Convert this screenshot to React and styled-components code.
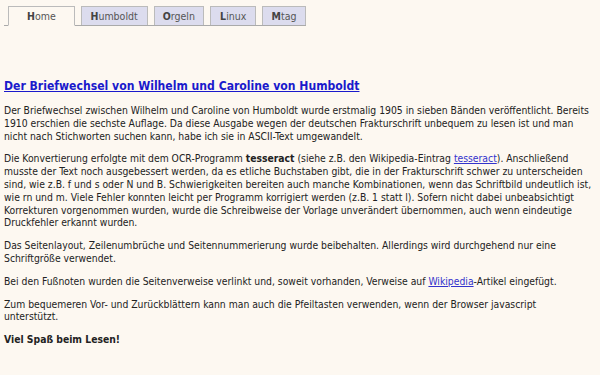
import React from "react";
import styled, { createGlobalStyle } from "styled-components";

const Global = createGlobalStyle`
  html, body { margin: 0; padding: 0; background: #fdf8f1; }
  body { font-family: "DejaVu Sans Condensed", "DejaVu Sans", sans-serif; font-size: 10.3px; color: #222; }
`;

const Page = styled.div`
  padding: 6px 8px 0 4px;
`;

const TabBar = styled.nav`
  display: flex;
  align-items: flex-end;
  gap: 6px;
  padding-left: 4px;
  width: 298px;
  border-bottom: 1px solid #aaa;
`;

const Tab = styled.a`
  display: block;
  box-sizing: border-box;
  height: ${(p) => (p.$active ? "20px" : "19px")};
  margin-bottom: ${(p) => (p.$active ? "-1px" : "0")};
  width: ${(p) => p.$w}px;
  text-align: center;
  line-height: 18px;
  font-family: "DejaVu Sans Condensed", "DejaVu Sans", sans-serif;
  font-size: 10.5px;
  color: #555;
  text-decoration: none;
  background: ${(p) => (p.$active ? "#fdf8f1" : "#dcdcee")};
  border: 1px solid #bbb;
  border-bottom: ${(p) => (p.$active ? "1px solid #fdf8f1" : "none")};
  b { color: #444; }
`;

const Content = styled.main`
  padding-top: 53px;
`;

const Title = styled.h1`
  margin: 0 0 10px 0;
  font-family: "DejaVu Sans Condensed", "DejaVu Sans", sans-serif;
  font-size: 12.1px;
  line-height: 15px;
  font-weight: bold;
  a { color: #1a1acc; }
`;

const Para = styled.p`
  margin: 0 0 10px 0;
  line-height: 12.8px;
  a { color: #3333cc; }
`;

const tabs = [
  ["Home", 67],
  ["Humboldt", 67],
  ["Orgeln", 51],
  ["Linux", 46],
  ["Mtag", 44],
];

export default function App() {
  return (
    <>
      <Global />
      <Page>
        <TabBar>
          {tabs.map(([t, w], i) => (
            <Tab key={t} href="#" $w={w} $active={i === 0}>
              <b>{t[0]}</b>
              {t.slice(1)}
            </Tab>
          ))}
        </TabBar>
        <Content>
          <Title>
            <a href="#">Der Briefwechsel von Wilhelm und Caroline von Humboldt</a>
          </Title>
          <Para>
            Der Briefwechsel zwischen Wilhelm und Caroline von Humboldt wurde erstmalig 1905 in sieben
            Bänden veröffentlicht. Bereits 1910 erschien die sechste Auflage. Da diese Ausgabe wegen der
            deutschen Frakturschrift unbequem zu lesen ist und man nicht nach Stichworten suchen kann,
            habe ich sie in ASCII-Text umgewandelt.
          </Para>
          <Para>
            Die Konvertierung erfolgte mit dem OCR-Programm <b>tesseract</b> (siehe z.B. den
            Wikipedia-Eintrag <a href="#">tesseract</a>). Anschließend musste der Text noch ausgebessert
            werden, da es etliche Buchstaben gibt, die in der Frakturschrift schwer zu unterscheiden
            sind, wie z.B. f und s oder N und B. Schwierigkeiten bereiten auch manche Kombinationen,
            wenn das Schriftbild undeutlich ist, wie rn und m. Viele Fehler konnten leicht per Programm
            korrigiert werden (z.B. 1 statt l). Sofern nicht dabei unbeabsichtigt Korrekturen
            vorgenommen wurden, wurde die Schreibweise der Vorlage unverändert übernommen, auch wenn
            eindeutige Druckfehler erkannt wurden.
          </Para>
          <Para>
            Das Seitenlayout, Zeilenumbrüche und Seitennummerierung wurde beibehalten. Allerdings wird
            durchgehend nur eine Schriftgröße verwendet.
          </Para>
          <Para>
            Bei den Fußnoten wurden die Seitenverweise verlinkt und, soweit vorhanden, Verweise auf{" "}
            <a href="#">Wikipedia</a>-Artikel eingefügt.
          </Para>
          <Para>
            Zum bequemeren Vor- und Zurückblättern kann man auch die Pfeiltasten verwenden, wenn der
            Browser javascript unterstützt.
          </Para>
          <Para>
            <b>Viel Spaß beim Lesen!</b>
          </Para>
        </Content>
      </Page>
    </>
  );
}
